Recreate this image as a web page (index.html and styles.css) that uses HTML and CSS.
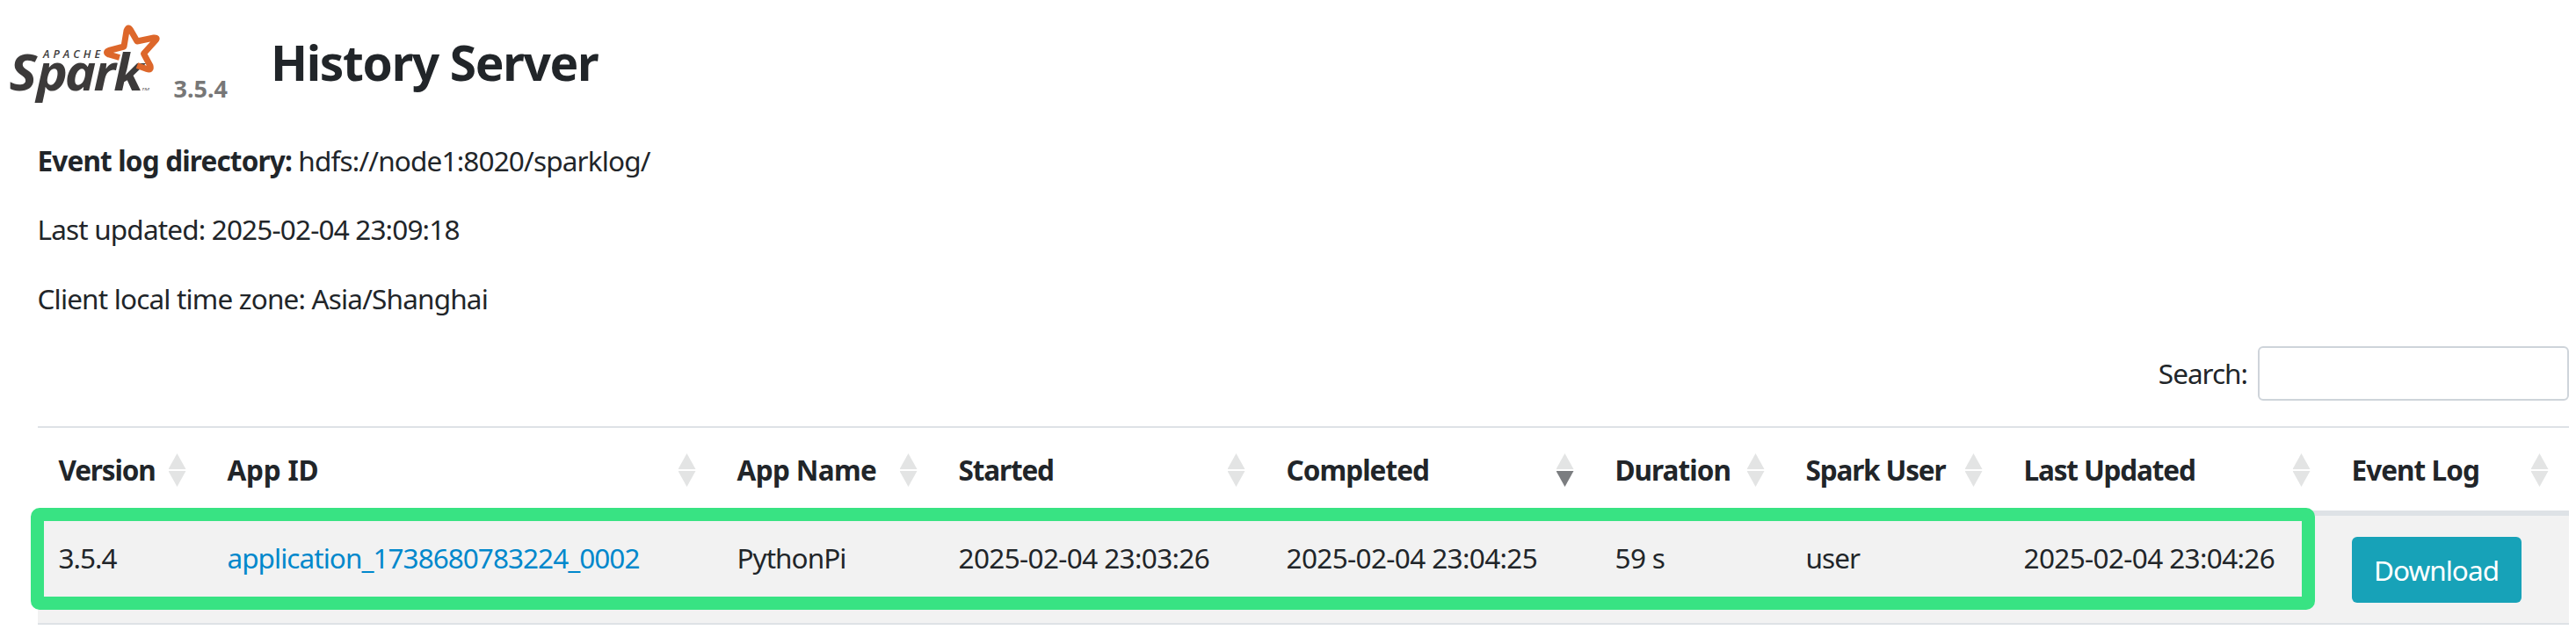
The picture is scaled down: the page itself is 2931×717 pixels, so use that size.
FILE: index.html
```html
<!DOCTYPE html>
<html lang="en">
<head>
<meta charset="utf-8">
<title>History Server</title>
<link rel="stylesheet" href="styles.css">
</head>
<body>
<header class="header">
  <svg class="logo" width="176" height="92" viewBox="8 24 176 92" role="img" aria-label="Apache Spark">
    <text class="logo-apache" x="49" y="66" textLength="65">APACHE</text>
    <text class="logo-spark" x="10.2 40.2 71.5 103.3 125.6" y="103" transform="scale(1.03 1)">Spark</text>
    <text class="logo-tm" x="161" y="103" textLength="9" lengthAdjust="spacingAndGlyphs">TM</text>
    <path class="logo-star" d="M136 65.500 L124 62 Q119 59.500 124 57.500 L141 53 L144 35 Q146 29.500 148.500 34 L156 47 L175 43 Q180 42.500 177 46 L163.500 61 L171 75 Q172.500 80.500 167 78.500 L156 74.500"/>
  </svg>
  <span class="version">3.5.4</span>
  <h1 class="title">History Server</h1>
</header>
<main class="main">
  <ul class="info">
    <li><strong>Event log directory:</strong> hdfs://node1:8020/sparklog/</li>
    <li>Last updated: 2025-02-04 23:09:18</li>
    <li>Client local time zone: Asia/Shanghai</li>
  </ul>
  <label class="search"><span>Search:</span><input type="search" class="search-input"></label>
  <div class="table-wrap">
    <table class="apps">
      <colgroup><col class="c1"><col class="c2"><col class="c3"><col class="c4"><col class="c5"><col class="c6"><col class="c7"><col class="c8"><col class="c9"></colgroup>
      <thead><tr>
        <th class="tight">Version</th><th class="loose">App ID</th><th class="semi">App Name</th><th class="tight">Started</th><th class="desc">Completed</th><th>Duration</th><th class="tight">Spark User</th><th class="tight">Last Updated</th><th>Event Log</th>
      </tr></thead>
      <tbody><tr>
        <td>3.5.4</td><td><a>application_1738680783224_0002</a></td><td>PythonPi</td><td class="time">2025-02-04 23:03:26</td><td class="time">2025-02-04 23:04:25</td><td class="time">59 s</td><td>user</td><td class="time">2025-02-04 23:04:26</td><td><a class="download">Download</a></td>
      </tr></tbody>
    </table>
    <div class="highlight"></div>
  </div>
</main>
</body>
</html>
```
FILE: styles.css
```css
* { box-sizing: border-box; }
body {
  margin: 0;
  width: 2931px;
  height: 717px;
  overflow: hidden;
  background: #fff;
  color: #212529;
  font: 31.5px/48px "Noto Sans", "Open Sans", sans-serif;
  letter-spacing: -0.83px;
}
.header { display: flex; height: 159px; padding-left: 8px; letter-spacing: 0; }
.logo { margin-top: 24px; flex: none; overflow: visible; }
.logo text { fill: #3c3a3a; font-family: "Open Sans", sans-serif; font-style: italic; font-weight: 700; }
.logo .logo-apache { font-size: 12.5px; font-weight: 600; }
.logo .logo-spark { font-size: 58px; }
.logo .logo-tm { font-size: 4px; font-weight: 400; }
.logo-star { fill: none; stroke: #dd672b; stroke-width: 7; stroke-linejoin: round; }
.version { width: 124px; margin-top: 77px; padding-left: 13.5px; color: #777; font-size: 27px; font-weight: 700; }
.title { margin: 31px 0 0; font-size: 55px; line-height: 80px; letter-spacing: -1.35px; }
.main { padding: 0 8px 0 43px; }
.info { margin: 0; padding: 0; list-style: none; }
.info li { margin-bottom: 30.3px; margin-left: -0.5px; white-space: pre; }
.search { display: flex; justify-content: flex-end; align-items: center; height: 62px; gap: 12px; }
.search span { letter-spacing: -1px; }
.search-input { width: 354px; height: 62px; border: 2px solid #ced4da; border-radius: 6px; background: #fff; }
.table-wrap { position: relative; margin-top: 29px; }
.apps { width: 2880px; table-layout: fixed; border-collapse: separate; border-spacing: 0; }
.c1 { width: 192px; } .c2 { width: 580px; } .c3 { width: 252px; }
.c4 { width: 373px; } .c5 { width: 374px; } .c6 { width: 217px; }
.c7 { width: 248px; } .c8 { width: 373px; } .c9 { width: 271px; }
.apps th, .apps td { padding: 24px 0 0 23.5px; text-align: left; vertical-align: top; white-space: nowrap; letter-spacing: -0.96px; }
.apps th { position: relative; height: 102px; border-top: 2px solid #dee2e6; border-bottom: 6px solid #dee2e6; }
.apps .loose { letter-spacing: -0.2px; }
.apps .semi { letter-spacing: -0.65px; }
.apps .time { letter-spacing: -0.63px; }
.apps .tight { letter-spacing: -1.15px; }
.apps th::before, .apps th::after {
  content: ""; position: absolute; right: 23.5px; width: 20px; height: 18px; background: #e3e4e4;
}
.apps th::before { top: 29px; clip-path: polygon(50% 0, 100% 100%, 0 100%); }
.apps th::after { top: 49px; clip-path: polygon(0 0, 100% 0, 50% 100%); }
.apps th.desc::after { background: #7b7d80; }
.apps td { height: 124px; background: #f2f2f2; border-bottom: 2px solid #dee2e6; }
.apps a { color: #0088cc; }
.apps .download { display: block; width: 193px; height: 75px; padding-top: 14px; border-radius: 6px; background: #17a2b8; color: #fff; text-align: center; }
.highlight { position: absolute; left: -8px; top: 93px; width: 2599px; height: 116px; border: 15px solid #38e383; border-radius: 10px; }
```
